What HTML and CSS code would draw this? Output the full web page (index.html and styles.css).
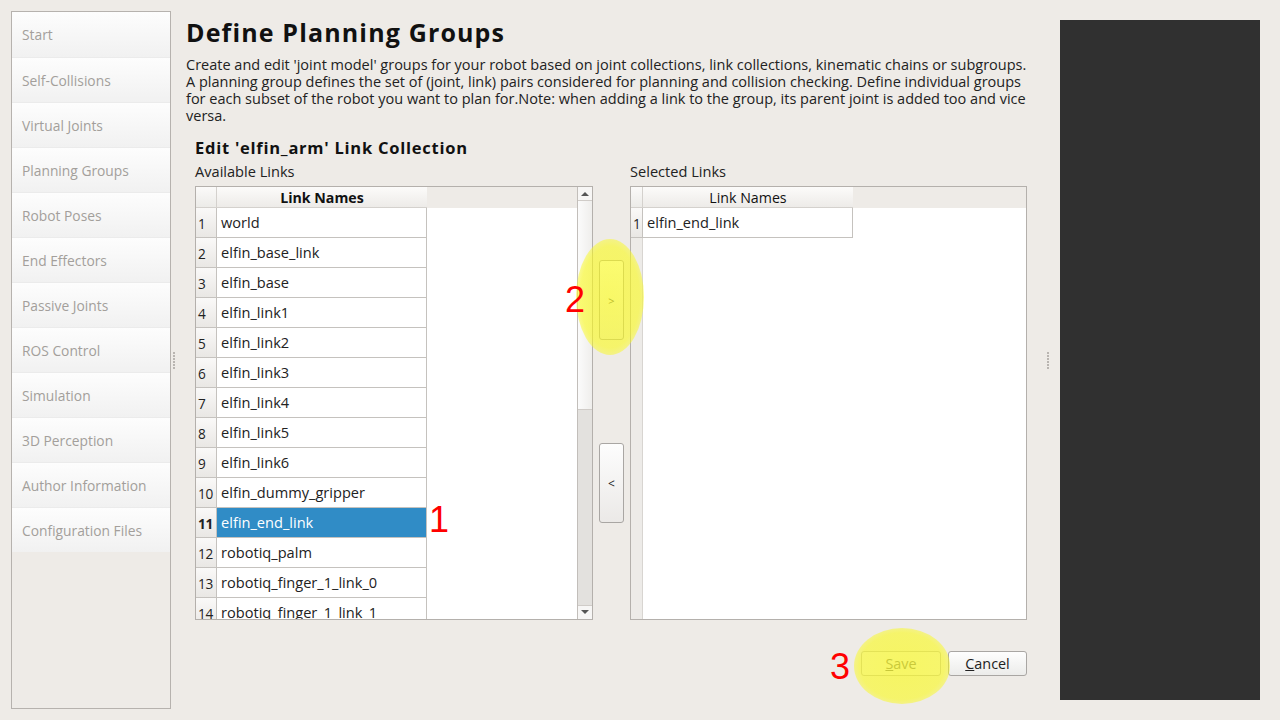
FILE: index.html
```html
<!DOCTYPE html>
<html>
<head>
<meta charset="utf-8">
<link rel="stylesheet" href="styles.css">
</head>
<body>
<div class="app">
  <nav class="sidebar">
    <div class="nav-item">Start</div>
    <div class="nav-item">Self-Collisions</div>
    <div class="nav-item">Virtual Joints</div>
    <div class="nav-item">Planning Groups</div>
    <div class="nav-item">Robot Poses</div>
    <div class="nav-item">End Effectors</div>
    <div class="nav-item">Passive Joints</div>
    <div class="nav-item">ROS Control</div>
    <div class="nav-item">Simulation</div>
    <div class="nav-item">3D Perception</div>
    <div class="nav-item">Author Information</div>
    <div class="nav-item">Configuration Files</div>
  </nav>
  <div class="splitter splitter-left"><span class="dots"></span></div>
  <main class="main">
    <h1 class="title">Define Planning Groups</h1>
    <p class="desc">Create and edit 'joint model' groups for your robot based on joint collections, link collections, kinematic chains or subgroups.<br>A planning group defines the set of (joint, link) pairs considered for planning and collision checking. Define individual groups<br>for each subset of the robot you want to plan for.Note: when adding a link to the group, its parent joint is added too and vice<br>versa.</p>
    <section class="editor">
      <h2 class="editor-title">Edit 'elfin_arm' Link Collection</h2>
      <div class="lists">
        <div class="label">Available Links</div>
        <div></div>
        <div class="label">Selected Links</div>

        <div class="table table-avail">
          <div class="table-body">
            <div class="header">
              <div class="corner"></div>
              <div class="hcell bold">Link Names</div>
              <div class="hfill"></div>
            </div>
            <div class="rows">
              <div class="row"><div class="num">1</div><div class="cell">world</div></div>
              <div class="row"><div class="num">2</div><div class="cell">elfin_base_link</div></div>
              <div class="row"><div class="num">3</div><div class="cell">elfin_base</div></div>
              <div class="row"><div class="num">4</div><div class="cell">elfin_link1</div></div>
              <div class="row"><div class="num">5</div><div class="cell">elfin_link2</div></div>
              <div class="row"><div class="num">6</div><div class="cell">elfin_link3</div></div>
              <div class="row"><div class="num">7</div><div class="cell">elfin_link4</div></div>
              <div class="row"><div class="num">8</div><div class="cell">elfin_link5</div></div>
              <div class="row"><div class="num">9</div><div class="cell">elfin_link6</div></div>
              <div class="row"><div class="num">10</div><div class="cell">elfin_dummy_gripper</div></div>
              <div class="row selected"><div class="num">11</div><div class="cell">elfin_end_link</div></div>
              <div class="row"><div class="num">12</div><div class="cell">robotiq_palm</div></div>
              <div class="row"><div class="num">13</div><div class="cell">robotiq_finger_1_link_0</div></div>
              <div class="row"><div class="num">14</div><div class="cell">robotiq_finger_1_link_1</div></div>
            </div>
          </div>
          <div class="scrollbar">
            <div class="arrow up"></div>
            <div class="thumb"></div>
            <div class="track"></div>
            <div class="arrow down"></div>
          </div>
        </div>

        <div class="move-buttons">
          <button class="move move-right">&gt;</button>
          <button class="move move-left">&lt;</button>
        </div>

        <div class="table table-sel">
          <div class="table-body">
            <div class="header">
              <div class="corner narrow"></div>
              <div class="hcell">Link Names</div>
              <div class="hfill"></div>
            </div>
            <div class="rows rows-sel">
              <div class="row"><div class="num narrow">1</div><div class="cell">elfin_end_link</div></div>
              <div class="num-strip"></div>
            </div>
          </div>
        </div>
      </div>
      <div class="actions">
        <button class="btn btn-save"><u>S</u>ave</button>
        <button class="btn btn-cancel"><u>C</u>ancel</button>
      </div>
    </section>

    <span class="glow glow-move"></span>
    <span class="glow glow-save"></span>
    <span class="mark mark-1">1</span>
    <span class="mark mark-2">2</span>
    <span class="mark mark-3">3</span>
  </main>
  <div class="splitter splitter-right"><span class="dots"></span></div>
  <div class="panel"></div>
</div>
</body>
</html>
```
FILE: styles.css
```css
* { box-sizing: border-box; }
html, body { margin: 0; padding: 0; }
body {
  background: #eeebe7;
  font-family: "Open Sans", "Noto Sans", sans-serif;
  font-size: 14px;
  color: #3c3c3c;
  width: 1280px;
  height: 720px;
  overflow: hidden;
}
.app { display: flex; height: 720px; }

.sidebar {
  margin: 11px 0 11px 11px;
  width: 160px;
  border: 1px solid #b6b2ae;
  background: #eeebe7;
  display: flex;
  flex-direction: column;
}
.nav-item {
  height: 45px;
  flex: none;
  display: flex;
  align-items: center;
  padding-left: 10px;
  color: #a39f9b;
  font-size: 13.8px;
  background: linear-gradient(#fdfdfd, #f1f1f1);
  border-top: 1px solid #ebebeb;
}
.nav-item:first-child { border-top: none; }

.splitter { display: flex; align-items: center; }
.splitter-left { width: 15px; padding-left: 2px; }
.splitter-right { width: 20px; padding-left: 7px; }
.dots {
  width: 2px;
  height: 17px;
  background: repeating-linear-gradient(#b9b5b1 0 2px, transparent 2px 3px);
}

.main {
  position: relative;
  width: 854px;
  padding-top: 17px;
}
.title {
  margin: 0;
  font-size: 25px;
  line-height: 30px;
  font-weight: bold;
  color: #111;
  letter-spacing: 1.15px;
}
.desc {
  margin: 9px 0 0;
  width: 850px;
  font-size: 14.5px;
  line-height: 17px;
  color: #222;
  white-space: nowrap;
}
.editor { padding-left: 9px; margin-top: 13px; }
.editor-title {
  margin: 0;
  font-size: 16.5px;
  line-height: 22px;
  font-weight: bold;
  color: #111;
  letter-spacing: 0.75px;
}
.lists {
  display: grid;
  grid-template-columns: 398px 25px 397px;
  column-gap: 6px;
  grid-template-rows: 25px 434px;
  margin-top: 2px;
}
.label { font-size: 14.6px; line-height: 20px; color: #222; }

.table {
  border: 1px solid #b4b0ac;
  background: #fff;
  display: flex;
  overflow: hidden;
}
.table-body { flex: 1; display: flex; flex-direction: column; overflow: hidden; }
.header { display: flex; height: 21px; flex: none; }
.corner {
  width: 21px;
  background: linear-gradient(#fbfaf9, #ecebe8);
  border-right: 1px solid #d4d1cd;
  border-bottom: 1px solid #d4d1cd;
}
.corner.narrow, .num.narrow { width: 12px; }
.hcell {
  width: 210px;
  background: linear-gradient(#fcfbfa, #edebe8);
  border-bottom: 1px solid #d4d1cd;
  text-align: center;
  font-size: 14.2px;
  line-height: 21px;
  color: #111;
}
.hcell.bold { font-weight: bold; }
.hfill { flex: 1; background: #eeebe7; }

.rows { position: relative; flex: 1; }
.row { display: flex; height: 30px; }
.num {
  width: 21px;
  flex: none;
  background: linear-gradient(#faf9f8, #e9e7e4);
  border-right: 1px solid #c5c2be;
  border-bottom: 1px solid #c5c2be;
  font-size: 13.6px;
  line-height: 32px;
  padding-left: 2px;
  color: #222;
  white-space: nowrap;
  overflow: hidden;
  letter-spacing: -0.3px;
}
.cell {
  width: 210px;
  flex: none;
  border-right: 1px solid #c5c2be;
  border-bottom: 1px solid #c5c2be;
  padding-left: 4px;
  font-size: 14.6px;
  line-height: 29px;
  color: #222;
  white-space: nowrap;
}
.row.selected .cell { background: #308cc6; color: #fff; }
.row.selected .num { font-weight: bold; }
.rows-sel { display: flex; flex-direction: column; }
.num-strip {
  width: 12px;
  flex: 1;
  background: #edebe8;
  border-right: 1px solid #d8d5d1;
}

.scrollbar {
  width: 15px;
  border-left: 1px solid #c2beba;
  display: flex;
  flex-direction: column;
}
.arrow {
  height: 14px;
  flex: none;
  background: #f7f6f5;
  position: relative;
}
.arrow::after {
  content: "";
  position: absolute;
  left: 3px;
  top: 5px;
  border-left: 4px solid transparent;
  border-right: 4px solid transparent;
}
.arrow.up { border-bottom: 1px solid #d0ccc8; }
.arrow.up::after { border-bottom: 4px solid #555; }
.arrow.down { border-top: 1px solid #d0ccc8; }
.arrow.down::after { border-top: 4px solid #555; top: 4px; }
.thumb {
  height: 209px;
  flex: none;
  background: linear-gradient(90deg, #fbfbfb, #efeeec);
  border-bottom: 1px solid #cfcbc7;
}
.track { flex: 1; background: #e3e1de; }

.move-buttons { position: relative; }
.move {
  position: absolute;
  left: 0;
  width: 25px;
  height: 80px;
  border: 1px solid #a9a6a3;
  border-radius: 3px;
  background: linear-gradient(#fdfdfd, #ebe9e7);
  font-family: "Open Sans", sans-serif;
  font-size: 12px;
  color: #222;
  padding: 0;
}
.move-right { top: 74px; color: #444; font-size: 11px; }
.move-left { top: 257px; }

.actions {
  display: flex;
  justify-content: flex-end;
  gap: 7px;
  width: 832px;
  margin-top: 31px;
}
.btn {
  height: 25px;
  border: 1px solid #a9a6a3;
  border-radius: 3px;
  background: linear-gradient(#fefefe, #ececea);
  font-family: "Open Sans", sans-serif;
  font-size: 14.4px;
  color: #222;
  padding: 0;
}
.btn-save { width: 80px; color: #6e6e6e; border-color: #bebbb7; background: #f1efed; }
.btn-cancel { width: 79px; }

.glow {
  position: absolute;
  pointer-events: none;
  border-radius: 50%;
  background: radial-gradient(ellipse at center, rgba(250,250,30,0.66) 0%, rgba(250,250,30,0.62) 62%, rgba(250,250,30,0) 100%);
}
.glow-move { left: 390px; top: 239px; width: 68px; height: 116px; }
.glow-save { left: 668px; top: 628px; width: 96px; height: 76px; }

.mark {
  position: absolute;
  font-family: "Liberation Sans", sans-serif;
  font-size: 36px;
  line-height: 36px;
  color: #ff0000;
}
.mark-1 { left: 243px; top: 502px; }
.mark-2 { left: 379px; top: 282px; }
.mark-3 { left: 644px; top: 649px; }

.panel {
  margin: 20px 0 20px 0;
  width: 200px;
  background: #303030;
}
```
